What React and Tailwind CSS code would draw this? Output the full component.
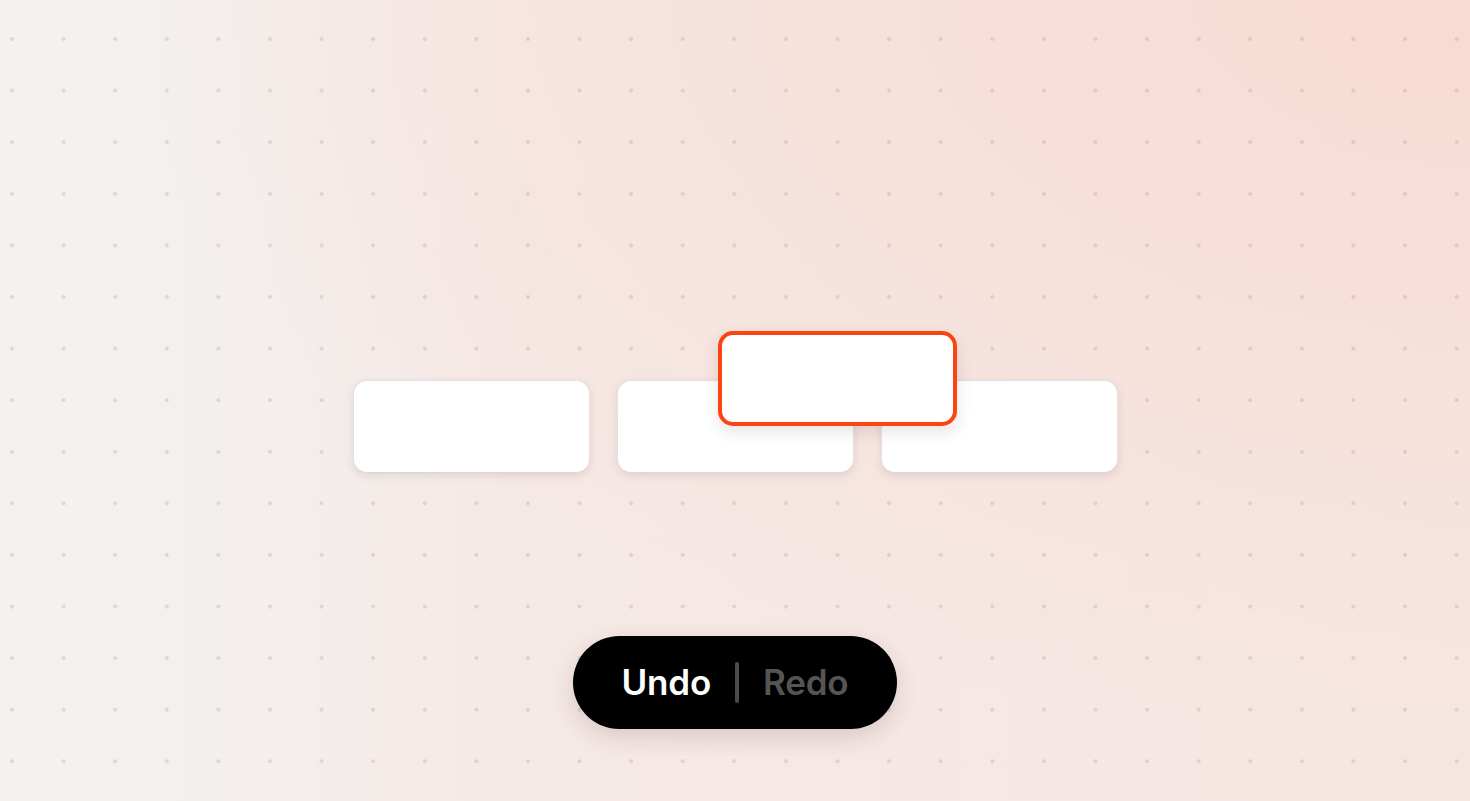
export default function App() {
  return (
    <div
      className="relative h-screen w-full overflow-hidden flex flex-col items-center pt-[380px] bg-[radial-gradient(circle,rgba(150,120,115,0.22)_1.6px,transparent_2.2px),radial-gradient(ellipse_at_top_right,#f8dbd2_0%,rgba(248,220,212,0)_65%),linear-gradient(to_right,#f3f2f1_5%,#f5e9e6_35%,#f6e6e2_100%)] [background-size:51.6px_51.6px,100%_100%,100%_100%] [background-position:-13.8px_13.2px,0_0,0_0]"
      style={{ fontFamily: 'Inter, "Noto Sans", sans-serif' }}
    >
      <div className="relative flex gap-[27px]">
        <div className="w-[237px] h-[93px] rounded-[14px] bg-white border border-[#e6e0de] border-b-[#dcd6d4] shadow-[0_3px_8px_rgba(60,30,20,0.10)]" />
        <div className="w-[237px] h-[93px] rounded-[14px] bg-white border border-[#e6e0de] border-b-[#dcd6d4] shadow-[0_3px_8px_rgba(60,30,20,0.10)]" />
        <div className="w-[237px] h-[93px] rounded-[14px] bg-white border border-[#e6e0de] border-b-[#dcd6d4] shadow-[0_3px_8px_rgba(60,30,20,0.10)]" />
        <div className="absolute left-[365px] top-[-49px] w-[239px] h-[95px] rounded-[15px] bg-white border-4 border-[#fb4413] shadow-[0_6px_16px_rgba(60,30,20,0.12)]" />
      </div>
      <div className="mt-[163px] flex items-center h-[93px] w-[324px] justify-center rounded-full bg-black shadow-[0_8px_24px_rgba(60,30,20,0.15)]">
        <span className="text-white text-[35px] font-semibold leading-none tracking-[-0.2px]">Undo</span>
        <span className="mx-[24px] block w-[4px] h-[41px] rounded-full bg-[#4a4a4a]" />
        <span className="text-[#555555] text-[35px] font-semibold leading-none tracking-[-0.2px]">Redo</span>
      </div>
    </div>
  );
}
